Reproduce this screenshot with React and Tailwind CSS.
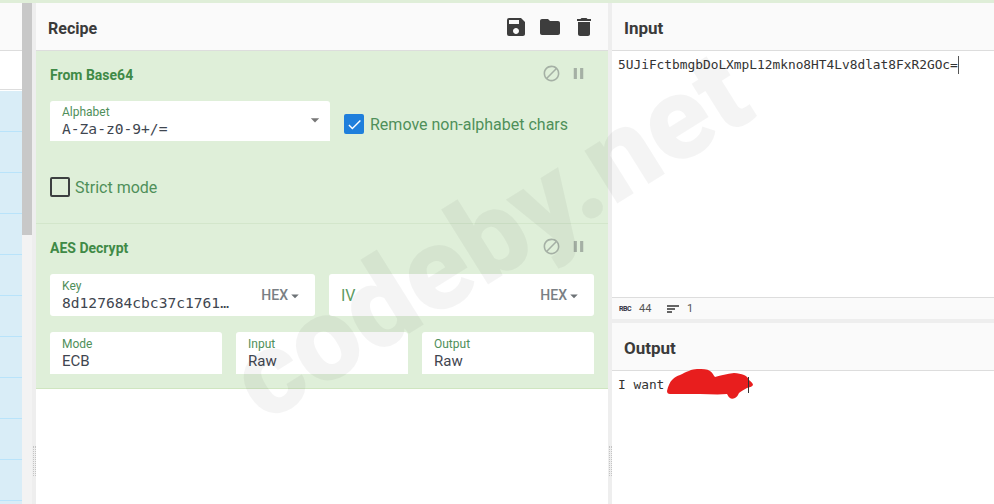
import React from "react";
import { MdSave, MdFolder, MdDelete, MdBlock, MdPause, MdCheck, MdArrowDropDown } from "react-icons/md";

const sans = "font-['Roboto',sans-serif]";
const mono = "font-['DejaVu_Sans_Mono',monospace]";

function Field({ label, value, w, h = "h-10", isMono, right, rounded = "rounded-t-[3px]", dim }) {
  return (
    <div className={`${w} ${h} ${rounded} bg-white pl-3 pr-[21px] flex items-center justify-between shrink-0`}>
      <div className="flex flex-col min-w-0">
        {label && <span className="text-[12px] leading-[13px] text-[#4f8f5a] mt-[2px] mb-[1px]">{label}</span>}
        <span className={`${isMono ? mono + " text-[14.6px]" : dim ? "text-[16px] mt-[1px]" : "text-[15px]"} leading-[18px] ${dim ? "text-[#5d9a62]" : "text-[#3f4650]"}`}>{value}</span>
      </div>
      {right}
    </div>
  );
}

function Hex() {
  return (
    <span className="flex items-center mt-[1px] text-[14px] text-[#7a7f84] font-medium">
      HEX<MdArrowDropDown className="size-[18px] -ml-[2px] -mr-[10px] text-[#6d7276]" />
    </span>
  );
}

function OpHead({ title }) {
  return (
    <div className="flex items-center justify-between pl-[14px] pr-[20px]">
      <span className="text-[14px] font-bold text-[#3f8a47]">{title}</span>
      <span className="relative -top-[2px] flex items-center gap-[8px] text-[#a5b0a5]">
        <MdBlock className="size-[19px]" />
        <MdPause className="size-[19px]" />
      </span>
    </div>
  );
}

function Check({ checked, label }) {
  return (
    <label className={`flex items-center ${checked ? "gap-[6px]" : "gap-[5px]"}`}>
      <span className={`size-[20px] rounded-[2px] flex items-center justify-center ${checked ? "bg-[#1f7fdc]" : "border-2 border-[#3c3f40]"}`}>
        {checked && <MdCheck className="size-[17px] text-white" />}
      </span>
      <span className="text-[16px] mt-[2px] text-[#4f8f5a]">{label}</span>
    </label>
  );
}

function Grip() {
  return <div className="absolute top-[443px] w-[3px] h-[30px] border-x border-dotted border-[#c4c4c4]" />;
}

export default function App() {
  return (
    <div className={`${sans} relative w-[994px] h-[504px] overflow-hidden bg-[#eeeeee] flex flex-col`}>
      <div className="h-[3px] bg-[#dfeed8] shrink-0" />
      <div className="relative flex flex-1 min-h-0">
        <aside className="w-[22px] flex flex-col bg-[#d9edf7] shrink-0">
          <div className="h-[48px] bg-[#fafafa] border-b border-[#dddddd]" />
          <div className="h-[39px] bg-white border-b border-[#dddddd]" />
          <div className="h-[1px] bg-white" />
          {[0, 1, 2, 3, 4, 5, 6, 7, 8, 9].map((i) => (
            <div key={i} className="h-[41px] shrink-0 border-b border-[#b9e3fa]" />
          ))}
        </aside>
        <div className="w-[10px] shrink-0 bg-[#f3f3f3] flex flex-col">
          <div className="h-[232px] bg-[#c8c8c8]" />
        </div>
        <div className="w-[4px] shrink-0 bg-[#eeeeee]" />

        <main className="w-[572px] shrink-0 bg-white flex flex-col">
          <header className="h-[48px] shrink-0 bg-[#fafafa] border-b border-[#dddddd] flex items-center justify-between pl-3 pr-[12px]">
            <h1 className="text-[16px] font-bold text-[#3a3a3a] mt-[5px]">Recipe</h1>
            <div className="flex items-center gap-[10px] text-[#3d3d3d]">
              <MdSave className="size-[24px]" />
              <MdFolder className="size-[24px]" />
              <MdDelete className="size-[24px]" />
            </div>
          </header>

          <section className="h-[173px] shrink-0 bg-[#dfefd9] border-b border-[#d3e6cb] pt-[14px]">
            <OpHead title="From Base64" />
            <div className="flex items-center gap-[14px] pl-[14px] mt-[15px]">
              <Field label="Alphabet" value="A-Za-z0-9+/=" w="w-[280px]" isMono right={<MdArrowDropDown className="size-[20px] -mr-[16px] -mt-[3px] text-[#777777]" />} />
              <div className="mt-[6px]">
                <Check checked label="Remove non-alphabet chars" />
              </div>
            </div>
            <div className="pl-[14px] mt-[33px]">
              <Check label="Strict mode" />
            </div>
          </section>

          <section className="h-[165px] shrink-0 bg-[#dfefd9] border-b border-[#cfe5c0] pt-[14px]">
            <OpHead title="AES Decrypt" />
            <div className="flex gap-[14px] pl-[14px] mt-[15px]">
              <Field label="Key" value="8d127684cbc37c1761…" w="w-[265px]" h="h-[42px]" isMono rounded="rounded-[3px]" right={<Hex />} />
              <Field value="IV" w="w-[265px]" h="h-[42px]" dim rounded="rounded-[3px]" right={<Hex />} />
            </div>
            <div className="flex gap-[14px] pl-[14px] mt-[16px]">
              <Field label="Mode" value="ECB" w="w-[172px]" h="h-[42px]" />
              <Field label="Input" value="Raw" w="w-[172px]" h="h-[42px]" />
              <Field label="Output" value="Raw" w="w-[172px]" h="h-[42px]" />
            </div>
          </section>
          <div className="flex-1" />
        </main>

        <div className="w-[4px] shrink-0 bg-[#eeeeee]" />

        <div className="flex-1 flex flex-col min-w-0 bg-white">
          <header className="h-[48px] shrink-0 bg-[#fafafa] border-b border-[#dddddd] flex items-center pl-3">
            <h2 className="text-[17px] font-bold text-[#3a3a3a] mt-[5px]">Input</h2>
          </header>
          <div className="h-[246px] shrink-0 pl-[6px] pt-[1px]">
            <span className={`${mono} text-[12.83px] leading-[18px] text-[#333333] border-r border-[#555555] inline-block`}>5UJiFctbmgbDoLXmpL12mkno8HT4Lv8dlat8FxR2GOc=</span>
          </div>
          <div className="h-[22px] shrink-0 bg-[#fafafa] border-t border-[#dddddd] flex items-center pl-[7px] pt-[1px] text-[11px] text-[#555555]">
            <span className="text-[7px] font-bold text-[#334] tracking-[-0.5px] w-[20px]">RBC</span>
            <span className="w-[27px]">44</span>
            <svg width="13" height="9" viewBox="0 0 13 9" className="mr-[8px]"><path d="M1 1h12M1 4h8M1 7h5" stroke="#333" strokeWidth="1.3" /></svg>
            <span>1</span>
          </div>
          <div className="h-[4px] shrink-0 bg-[#eeeeee]" />
          <header className="h-[48px] shrink-0 bg-[#fafafa] border-b border-[#dddddd] flex items-center pl-3">
            <h2 className="text-[17px] font-bold text-[#3a3a3a] mt-[5px]">Output</h2>
          </header>
          <div className="relative flex-1 pl-[6px] pt-[1px]">
            <span className={`${mono} text-[12.83px] leading-[18px] text-[#333333]`}>I want</span>
            <svg className="absolute left-[55px] top-[-2px]" width="90" height="32" viewBox="0 0 90 32">
              <path d="M0 22 C1 17 3 13 5 11 C8 8 10 7 13 6 C19 3 25 0 30 0 C36 0 40 0 43 2 C46 4 46 6 48 8 C54 6 60 5 67 4 C71 4 74 5 77 6 C80 7 81 9 82 11 C84 13 86 14 86 16 C85 18 82 18 80 19 C77 21 74 22 72 24 C71 26 70 28 68 29 C66 30 64 30 63 29 C61 28 61 26 60 25 C50 26 42 25 33 25 C22 25 12 25 3 25 C1 25 0 24 0 22 Z" fill="#e81e1e" />
            </svg>
            <span className="absolute left-[136px] top-[6px] w-px h-[16px] bg-[#333333]" />
          </div>
        </div>

        <div className="absolute left-[33px] top-0"><Grip /></div>
        <div className="absolute left-[609px] top-0"><Grip /></div>
      </div>

      <div className="absolute left-[175px] top-[177px] w-[630px] text-center text-[118px] leading-none font-black text-black/[0.045] -rotate-[32deg] pointer-events-none whitespace-nowrap">
        codeby.net
      </div>
    </div>
  );
}
